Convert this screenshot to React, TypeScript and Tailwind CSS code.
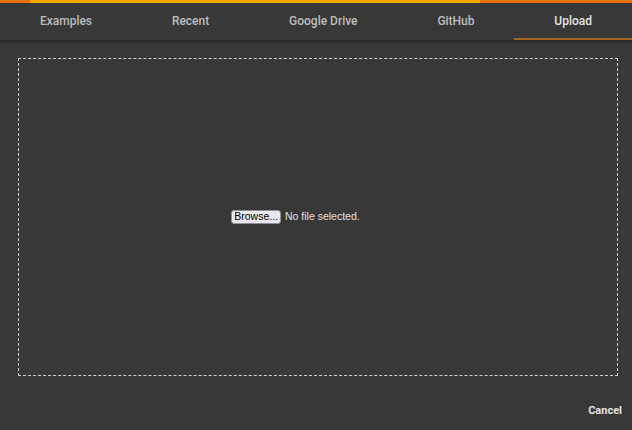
import React from 'react';

const tabs = ['Examples', 'Recent', 'Google Drive', 'GitHub', 'Upload'];

export default function App() {
  return (
    <div
      className="w-[632px] h-[430px] bg-[#383838] flex flex-col overflow-hidden"
      style={{ fontFamily: 'Roboto, "Open Sans", sans-serif' }}
    >
      <div className="flex h-[3px]">
        <div className="w-[30px] bg-[#e8710a]" />
        <div className="w-[450px] bg-[#f9ab00]" />
        <div className="flex-1 bg-[#e8710a]" />
      </div>
      <div className="flex h-[37px] bg-[#383838] shadow-[0_2px_3px_rgba(0,0,0,0.35)] relative z-10">
        {tabs.map((t) => {
          const active = t === 'Upload';
          return (
            <div
              key={t}
              className={`flex-auto flex items-center justify-center text-[12px] font-medium border-b-2 ${
                active ? 'text-[#e3e3e3] border-[#a8652a]' : 'text-[#bdbdbd] border-transparent'
              }`}
            >
              {t}
            </div>
          );
        })}
      </div>
      <div className="flex-1 pl-[18px] pr-[14px] pt-[18px]">
        <div className="h-[318px] border border-dashed border-[#d0d0d0] flex items-center justify-center">
          <div
            className="flex items-center gap-[4px] mr-[45px] text-[10.5px]"
            style={{ fontFamily: '"Liberation Sans", Arial, sans-serif' }}
          >
            <span className="bg-[#e9e9ed] text-black border border-[#8f8f9d] rounded-[3px] px-[2px] h-[14px] flex items-center">
              Browse...
            </span>
            <span className="text-[#e0e0e0]">No file selected.</span>
          </div>
        </div>
      </div>
      <div className="flex justify-end px-[10px] pb-[11px]">
        <span className="text-[11px] font-bold text-[#e3e3e3]">Cancel</span>
      </div>
    </div>
  );
}
